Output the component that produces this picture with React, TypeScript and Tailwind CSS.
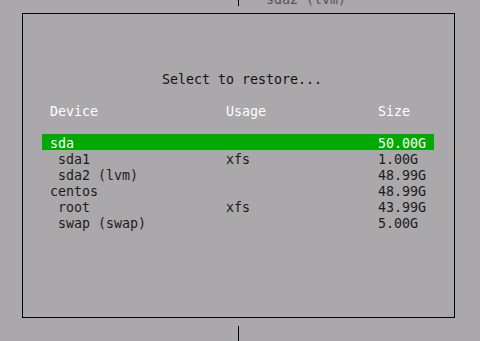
const rows = [
  { dev: "sda", usage: "", size: "50.00G", selected: true },
  { dev: " sda1", usage: "xfs", size: "1.00G" },
  { dev: " sda2 (lvm)", usage: "", size: "48.99G" },
  { dev: "centos", usage: "", size: "48.99G" },
  { dev: " root", usage: "xfs", size: "43.99G" },
  { dev: " swap (swap)", usage: "", size: "5.00G" },
];

function Row({ dev, usage, size, selected }: { dev: string; usage: string; size: string; selected?: boolean }) {
  return (
    <div
      className={`flex h-4 w-[392px] whitespace-pre pl-2 pt-[2px] ${
        selected ? "bg-[#00aa00] text-white" : "text-[#1c1c1c]"
      }`}
    >
      <span className="w-[176px]">{dev}</span>
      <span className="w-[152px]">{usage}</span>
      <span>{size}</span>
    </div>
  );
}

export default function App() {
  return (
    <div
      className="w-[480px] h-[341px] overflow-hidden bg-[#aaa8aa] text-[13.3px] leading-4"
      style={{ fontFamily: '"DejaVu Sans Mono", "Liberation Mono", monospace' }}
    >
      {/* previous dialog peeking out at the top */}
      <div className="h-[6px] overflow-hidden">
        <div className="-mt-[10px] flex h-4 whitespace-pre">
          <div className="w-[238px]" />
          <div className="h-4 w-px bg-black" />
          <div className="w-[27px]" />
          <span className="pt-[2px] text-[#555]">sda2 (lvm)</span>
        </div>
      </div>

      {/* restore dialog */}
      <div className="ml-[22px] mt-[7px] h-[305px] w-[433px] border border-black pl-[19px] pt-[56px]">
        <div className="flex h-4 whitespace-pre pl-[120px] pt-[2px] text-[#111]">Select to restore...</div>
        <div className="h-4" />
        <div className="flex h-4 w-[392px] whitespace-pre pl-2 pt-[2px] text-white">
          <span className="w-[176px]">Device</span>
          <span className="w-[152px]">Usage</span>
          <span>Size</span>
        </div>
        <div className="h-4" />
        {rows.map((r) => (
          <Row key={r.dev} {...r} />
        ))}
      </div>

      {/* line below */}
      <div className="mt-[8px] flex">
        <div className="w-[238px]" />
        <div className="h-4 w-px bg-black" />
      </div>
    </div>
  );
}
